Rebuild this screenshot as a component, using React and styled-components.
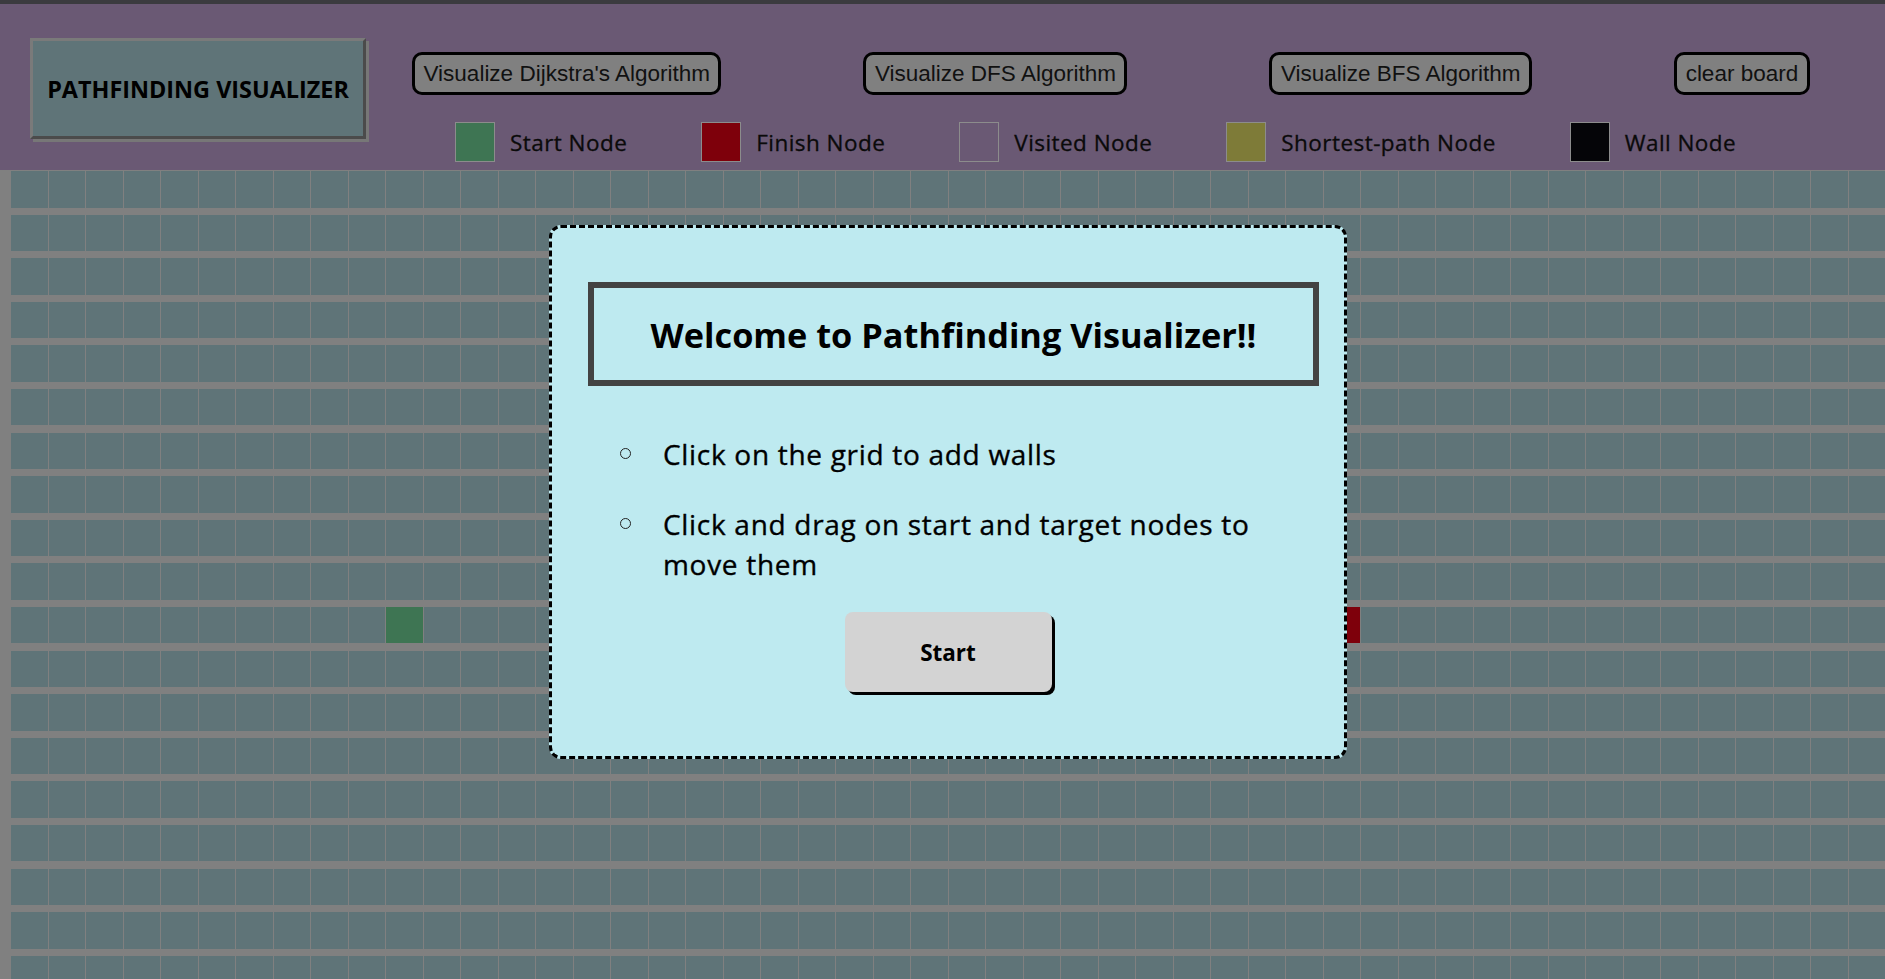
import React from "react";
import styled, { createGlobalStyle } from "styled-components";

const ROWS = 20;
const COLS = 50;
const START = { row: 10, col: 10 };
const FINISH = { row: 10, col: 35 };

const GlobalStyle = createGlobalStyle`
  html, body {
    margin: 0;
    padding: 0;
    background: #808080;
    overflow: hidden;
    font-family: "Open Sans", "Noto Sans", sans-serif;
  }
`;

const Page = styled.div`
  position: relative;
  width: 1885px;
  height: 979px;
  overflow: hidden;
  background: #808080;
`;

const TopStrip = styled.div`
  height: 4px;
  background: #3b3b3f;
`;

const Header = styled.header`
  display: flex;
  align-items: flex-start;
  height: 166px;
  background: #6a5974;
`;

const TitleBox = styled.div`
  box-sizing: border-box;
  flex: none;
  width: 336px;
  height: 101px;
  margin: 34px 0 0 30px;
  display: flex;
  align-items: center;
  justify-content: center;
  background: #5f7478;
  border: 3px solid;
  border-color: #7a7a7a #4b4b4b #4b4b4b #7a7a7a;
  box-shadow: 3px 3px 0 #777777;
  font-weight: 700;
  font-size: 23.4px;
  color: #000;
`;

const Controls = styled.div`
  flex: 1;
  display: flex;
  flex-direction: column;
  padding-top: 48px;
`;

const NavRow = styled.nav`
  display: flex;
  gap: 142px;
  padding-left: 46px;
`;

const NavButton = styled.button`
  box-sizing: border-box;
  height: 43px;
  padding: 0 8.5px;
  background: #808080;
  border: 3px solid #000;
  border-radius: 10px;
  font-family: "Liberation Sans", Arial, sans-serif;
  font-size: 22.5px;
  color: #111;
  white-space: nowrap;
  cursor: pointer;
`;

const Legend = styled.div`
  display: flex;
  align-items: center;
  gap: 74px;
  margin-top: 27px;
  padding-left: 89px;
`;

const LegendItem = styled.div`
  display: flex;
  align-items: center;
  gap: 15px;
`;

const Swatch = styled.span`
  box-sizing: border-box;
  width: 40px;
  height: 40px;
  flex: none;
  border: 1px solid #8c8c8c;
  background: ${(p) => p.$color};
`;

const LegendLabel = styled.span`
  font-size: 22.5px;
  letter-spacing: 0.45px;
  -webkit-text-stroke: 0.3px #0a0a0a;
  color: #0a0a0a;
  white-space: nowrap;
`;

const Grid = styled.div`
  margin-left: 10px;
`;

const Row = styled.div`
  display: flex;
  height: 37.5px;
  margin-bottom: 6.1px;
`;

const Cell = styled.div`
  box-sizing: border-box;
  flex: none;
  width: 37.5px;
  height: 100%;
  border-left: 1px solid #808080;
  border-top: 1px solid #808080;
  background: ${(p) =>
    p.$kind === "start" ? "#3e7553" : p.$kind === "finish" ? "#7e000b" : "#5f7478"};
`;

const Modal = styled.div`
  position: absolute;
  left: 549px;
  top: 225px;
  box-sizing: border-box;
  width: 798px;
  height: 534px;
  border: 3px dashed #000;
  border-radius: 12px;
  background: #beeaf0;
  display: flex;
  flex-direction: column;
`;

const ModalTitle = styled.h1`
  box-sizing: border-box;
  margin: 54px 0 0 36px;
  width: 731px;
  height: 104px;
  border: 6px solid #434343;
  display: flex;
  align-items: center;
  justify-content: center;
  font-size: 34.3px;
  font-weight: 700;
  color: #000;
`;

const Tips = styled.ul`
  list-style: none;
  margin: 47.5px 0 0 68px;
  padding: 0;
  width: 680px;
  display: flex;
  flex-direction: column;
  gap: 30px;
`;

const Tip = styled.li`
  display: flex;
  align-items: flex-start;
  gap: 32px;
  font-size: 28px;
  letter-spacing: 0.7px;
  -webkit-text-stroke: 0.35px #000;
  line-height: 40px;
  color: #000;
`;

const Bullet = styled.span`
  box-sizing: border-box;
  flex: none;
  width: 11px;
  height: 11px;
  margin-top: 14.5px;
  border: 1px solid #222;
  border-radius: 50%;
`;

const StartButton = styled.button`
  align-self: center;
  margin-top: 28.5px;
  width: 207px;
  height: 80px;
  background: #d3d3d3;
  border: none;
  border-radius: 8px;
  box-shadow: 3px 3px 0 #000;
  font-family: "Open Sans", "Noto Sans", sans-serif;
  font-weight: 700;
  font-size: 22.5px;
  color: #000;
  cursor: pointer;
`;

const legend = [
  { label: "Start Node", color: "#3e7553" },
  { label: "Finish Node", color: "#7e000b" },
  { label: "Visited Node", color: "transparent" },
  { label: "Shortest-path Node", color: "#7e7b38" },
  { label: "Wall Node", color: "#050508" },
];

const buttons = [
  "Visualize Dijkstra's Algorithm",
  "Visualize DFS Algorithm",
  "Visualize BFS Algorithm",
  "clear board",
];

export default function App() {
  const rows = [];
  for (let r = 0; r < ROWS; r++) {
    const cells = [];
    for (let c = 0; c < COLS; c++) {
      let kind = "empty";
      if (r === START.row && c === START.col) kind = "start";
      else if (r === FINISH.row && c === FINISH.col) kind = "finish";
      cells.push(<Cell key={c} $kind={kind} />);
    }
    rows.push(<Row key={r}>{cells}</Row>);
  }

  return (
    <Page>
      <GlobalStyle />
      <TopStrip />
      <Header>
        <TitleBox>PATHFINDING VISUALIZER</TitleBox>
        <Controls>
          <NavRow>
            {buttons.map((b) => (
              <NavButton key={b}>{b}</NavButton>
            ))}
          </NavRow>
          <Legend>
            {legend.map((l) => (
              <LegendItem key={l.label}>
                <Swatch $color={l.color} />
                <LegendLabel>{l.label}</LegendLabel>
              </LegendItem>
            ))}
          </Legend>
        </Controls>
      </Header>
      <Grid>{rows}</Grid>
      <Modal>
        <ModalTitle>Welcome to Pathfinding Visualizer!!</ModalTitle>
        <Tips>
          <Tip>
            <Bullet />
            <span>Click on the grid to add walls</span>
          </Tip>
          <Tip>
            <Bullet />
            <span>Click and drag on start and target nodes to move them</span>
          </Tip>
        </Tips>
        <StartButton>Start</StartButton>
      </Modal>
    </Page>
  );
}
